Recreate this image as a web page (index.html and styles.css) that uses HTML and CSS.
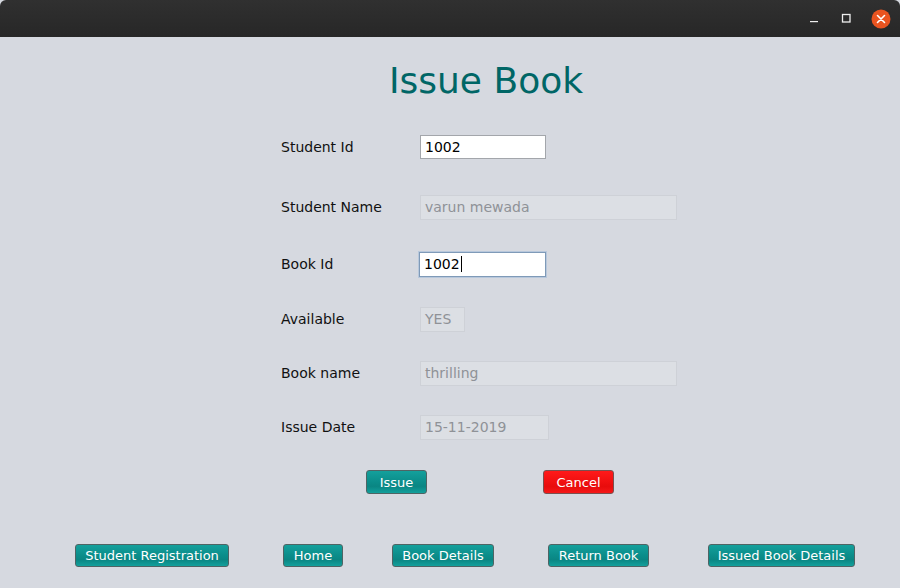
FILE: index.html
```html
<!DOCTYPE html>
<html>
<head>
<meta charset="utf-8">
<link rel="stylesheet" href="styles.css">
</head>
<body>
<div class="window">
  <header class="titlebar">
    <div class="controls">
      <svg class="ctl" width="12" height="12" viewBox="0 0 12 12"><rect x="2" y="7" width="8" height="1.2" fill="#eee"/></svg>
      <svg class="ctl" width="12" height="12" viewBox="0 0 12 12"><rect x="2.5" y="1.5" width="7.5" height="7.5" fill="none" stroke="#eee" stroke-width="1.3"/></svg>
      <svg class="ctl close" width="20" height="20" viewBox="0 0 20 20"><circle cx="10" cy="10" r="9.5" fill="#e95420"/><path d="M6.5 6.5 L13.5 13.5 M13.5 6.5 L6.5 13.5" stroke="#fff" stroke-width="1.6" stroke-linecap="round"/></svg>
    </div>
  </header>
  <main class="content">
    <h1 class="title">Issue Book</h1>
    <div class="form">
      <div class="row"><span class="label">Student Id</span><div class="field w126 editable">1002</div></div>
      <div class="row"><span class="label">Student Name</span><div class="field w256 disabled">varun mewada</div></div>
      <div class="row"><span class="label">Book Id</span><div class="field w127 editable focused">1002<span class="caret"></span></div></div>
      <div class="row"><span class="label">Available</span><div class="field w44 disabled">YES</div></div>
      <div class="row"><span class="label">Book name</span><div class="field w256 disabled">thrilling</div></div>
      <div class="row"><span class="label">Issue Date</span><div class="field w129 disabled">15-11-2019</div></div>
    </div>
    <div class="actions">
      <button class="btn teal issue">Issue</button>
      <button class="btn red cancel">Cancel</button>
    </div>
    <nav class="nav">
      <button class="btn teal nb1">Student Registration</button>
      <button class="btn teal nb2">Home</button>
      <button class="btn teal nb3">Book Details</button>
      <button class="btn teal nb4">Return Book</button>
      <button class="btn teal nb5">Issued Book Details</button>
    </nav>
  </main>
</div>
</body>
</html>
```

FILE: styles.css
```css
* { box-sizing: border-box; }
html, body { margin: 0; padding: 0; }
body {
  width: 900px;
  height: 588px;
  overflow: hidden;
  background: #d6d9e0;
  font-family: "DejaVu Sans", sans-serif;
}
.window { display: flex; flex-direction: column; height: 588px; }
.titlebar {
  height: 37px;
  background: linear-gradient(#303030, #272727);
  display: flex;
  justify-content: flex-end;
  align-items: center;
  border-radius: 6px 6px 0 0;
}
.controls { display: flex; align-items: center; padding-right: 9px; }
.ctl { display: block; }
.controls .ctl:nth-child(1) { margin-right: 20px; margin-top: 2px; }
.controls .ctl:nth-child(2) { margin-right: 19px; margin-top: 0; }
.content {
  flex: 1;
  display: flex;
  flex-direction: column;
  background: #d6d9e0;
}
.title {
  margin: 0;
  margin-top: 23px;
  height: 42px;
  line-height: 42px;
  text-align: center;
  font-weight: normal;
  font-size: 36px;
  color: #006666;
  padding-left: 72px;
}
.form {
  margin-top: 33px;
  margin-left: 281px;
  display: grid;
  grid-template-rows: 60px 57px 55px 54px 54px 55px;
}
.row { display: flex; align-items: flex-start; }
.label {
  width: 139px;
  font-size: 14px;
  line-height: 24px;
  color: #111;
}
.field {
  height: 25px;
  line-height: 23px;
  font-size: 14px;
  padding-left: 4px;
  white-space: nowrap;
}
.editable {
  background: #fff;
  border: 1px solid #a3a6ab;
  color: #000;
  height: 24px;
  line-height: 22px;
}
.focused {
  border: 1px solid #7f9ab8;
  box-shadow: 0 0 0 1px #b8c8dc;
  height: 25px;
  margin-left: -1px;
}
.caret {
  display: inline-block;
  width: 1px;
  height: 16px;
  background: #000;
  vertical-align: -3px;
  margin-left: 1px;
}
.disabled {
  background: #dcdfe4;
  border: 1px solid #ced1d7;
  color: #8f9297;
}
.w126 { width: 126px; }
.w127 { width: 127px; }
.w256 { width: 257px; }
.w44 { width: 45px; }
.w129 { width: 129px; }
.actions {
  display: flex;
  margin-left: 366px;
}
.btn {
  font-family: "DejaVu Sans", sans-serif;
  font-size: 13px;
  color: #fff;
  border: 1px solid #5c6066;
  border-radius: 3px;
  padding: 0;
  height: 24px;
  line-height: 21px;
  text-align: center;
}
.teal {
  background: linear-gradient(#14a09c 0%, #0b8d8a 50%, #0a8683 70%, #13a09c 100%);
  border-color: #4f6464;
}
.red {
  background: linear-gradient(#ff1a1a 0%, #f01010 50%, #e80c0c 70%, #f51818 100%);
  border-color: #7a5050;
}
.issue { width: 61px; }
.cancel { width: 71px; margin-left: 116px; }
.nav {
  margin-top: 50px;
  display: flex;
}
.nav .btn { height: 23px; line-height: 20px; }
.nb1 { width: 154px; margin-left: 75px; }
.nb2 { width: 60px; margin-left: 54px; }
.nb3 { width: 102px; margin-left: 49px; }
.nb4 { width: 101px; margin-left: 54px; }
.nb5 { width: 147px; margin-left: 59px; }
```
